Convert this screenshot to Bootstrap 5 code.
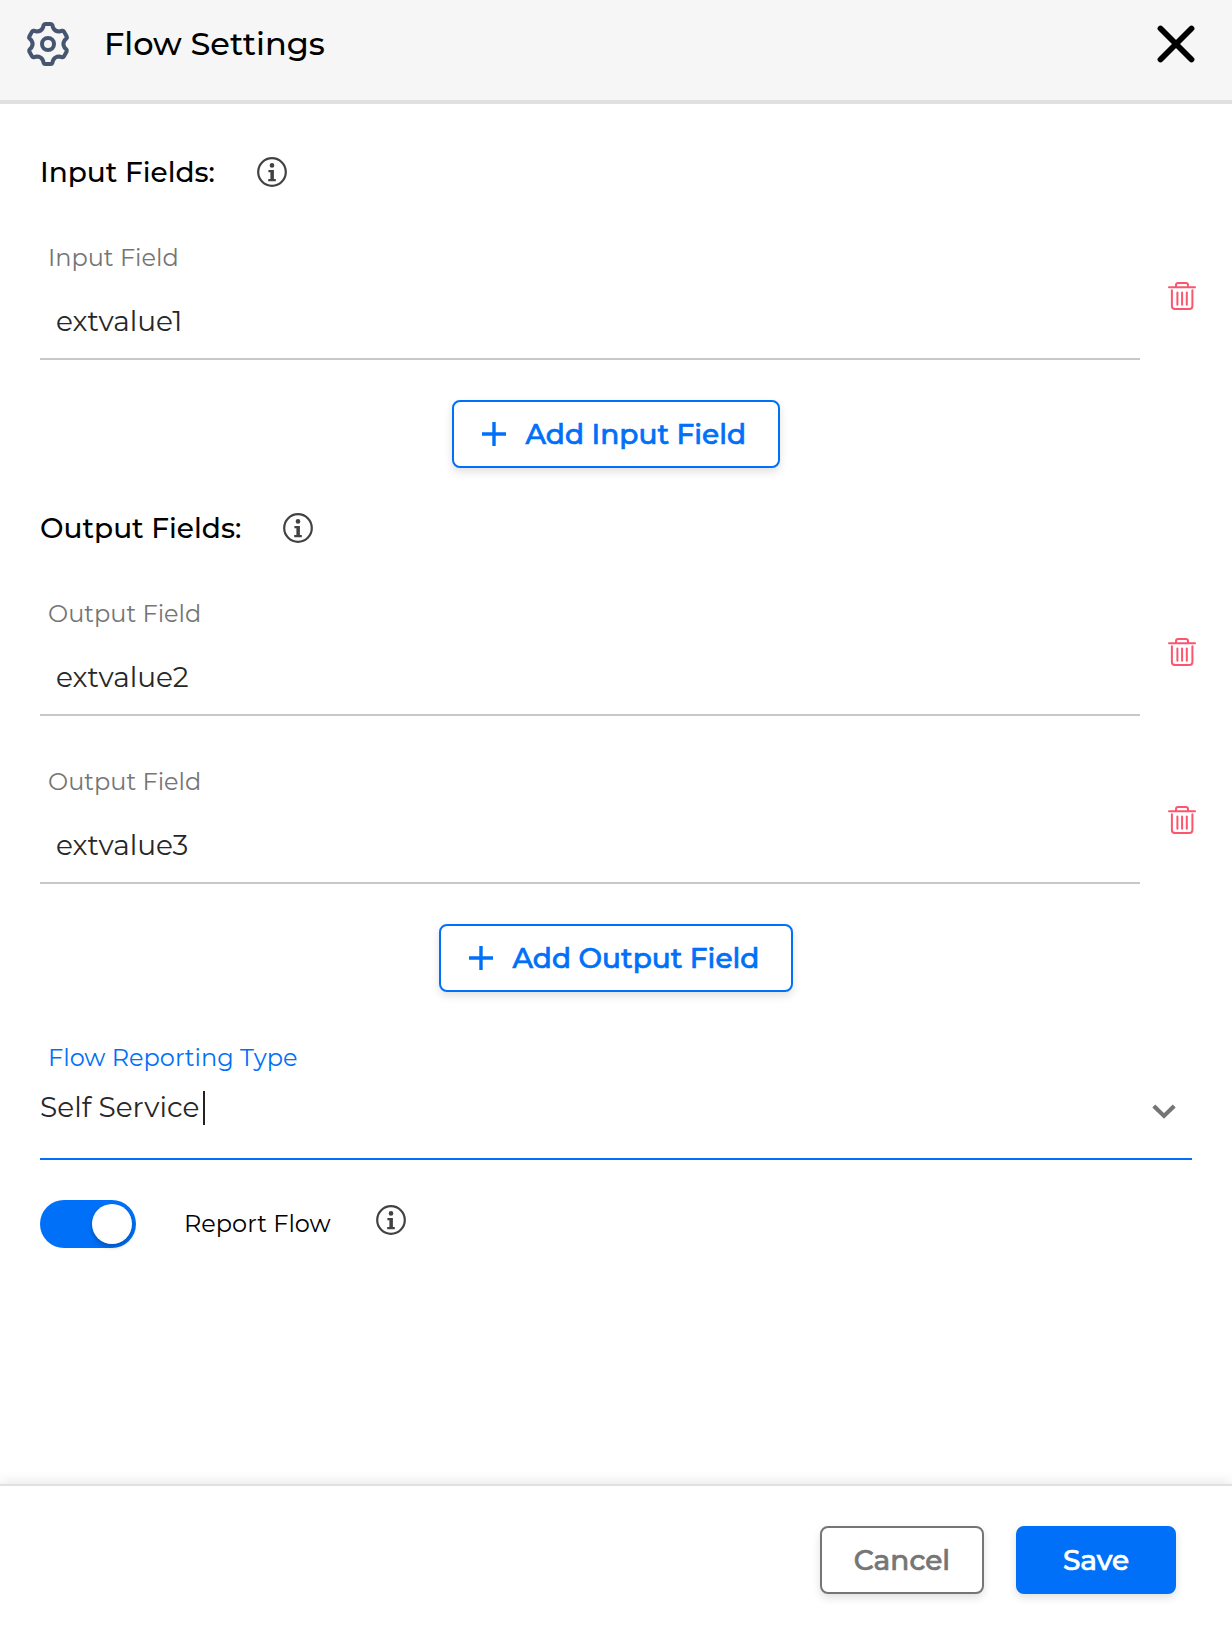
<!DOCTYPE html>
<html lang="en">
<head>
<meta charset="utf-8">
<meta name="viewport" content="width=device-width, initial-scale=1">
<title>Flow Settings</title>
<link rel="stylesheet" href="https://cdn.jsdelivr.net/npm/bootstrap@5.3.0/dist/css/bootstrap.min.css">
<style>
  :root { --flow-blue: #0070f8; --flow-gray: #757575; }
  body { font-family: Montserrat, Inter, sans-serif; color: #000; height: 1630px; background: #fff; overflow: hidden; }
  svg { display: block; flex: none; }

  .panel-head { height: 104px; background: #f6f6f6; border-bottom: 4px solid #e0e0e0; padding: 22px 35px 0 26px; }
  .panel-title { font-size: 32px; font-weight: 500; line-height: 44px; margin-left: 34px; }
  .panel-main { padding: 48px 40px 0; }

  .group-title { font-size: 28px; font-weight: 500; line-height: 40px; }
  .group-head { height: 40px; margin-bottom: 44px; }
  .group-head svg { margin-left: 42px; }

  .field-row { height: 124px; }
  .field-row + .field-row { margin-top: 44px; }
  .field-box { width: 1100px; flex: none; border-bottom: 2px solid #c8c8c8; }
  .field-label { font-size: 24px; line-height: 44px; padding-left: 8px; color: var(--flow-gray); }
  .field-value { font-size: 28px; line-height: 82px; padding-left: 16px; color: #272727; height: 78px; }
  .trash-btn { margin: 46px 0 0 28px; color: #fa566e; }

  .add-line { margin: 40px 0; }
  .btn.btn-flow { height: 68px; border: 2px solid var(--flow-blue); border-radius: 8px; font-size: 28px; font-weight: 500; line-height: 40px; -webkit-text-stroke: .7px currentColor; color: var(--flow-blue); background: #fff; box-shadow: 0 4px 8px rgba(0,0,0,.12); padding: 0; white-space: nowrap; }
  .btn.add-btn { padding-left: 28px; gap: 19.5px; }
  .btn.add-in { width: 328px; }
  .btn.add-out { width: 354px; }
  .btn.cancel-btn { width: 164px; color: var(--flow-gray); border-color: var(--flow-gray); }
  .btn.save-btn { width: 160px; color: #fff; background: var(--flow-blue); }

  .select-box { height: 124px; border-bottom: 2px solid var(--flow-blue); margin-top: 44px; }
  .select-box .field-label { color: var(--flow-blue); }
  .select-value { font-size: 28px; line-height: 32px; padding-bottom: 2px; color: #272727; }
  .select-line { padding: 11px 15px 0 0; }
  .caret-bar { width: 2px; height: 34px; margin-left: 4px; background: #222; }

  .report-line { margin-top: 40px; height: 48px; }
  .flow-toggle { width: 96px; height: 48px; border-radius: 24px; background: var(--flow-blue); padding: 4px; }
  .flow-knob { width: 40px; height: 40px; border-radius: 50%; background: #fff; box-shadow: 0 3px 5px rgba(0,0,0,.25); }
  .report-text { font-size: 24px; line-height: 47px; margin-left: 48px; width: 192px; }
  .report-line svg { margin-top: 5px; }

  .panel-foot { height: 146px; border-top: 2px solid #e0e0e0; padding: 40px 56px 0 0; gap: 32px; box-shadow: 0 -2px 12px rgba(0,0,0,.1); background: #fff; }
</style>
<script src="https://cdn.jsdelivr.net/npm/bootstrap@5.3.0/dist/js/bootstrap.bundle.min.js"></script>
</head>
<body class="d-flex flex-column">

<svg width="0" height="0" class="position-absolute">
  <symbol id="info" viewBox="-15 -15 30 30">
    <circle r="13.8" fill="none" stroke="#424242" stroke-width="2.2"/>
    <circle cy="-6.6" r="2.3" fill="#424242"/>
    <path d="M-3.6-2H1.9V6.9H3.8V9.2H-3.8V6.9H-1.6V.2H-3.6Z" fill="#424242"/>
  </symbol>
  <symbol id="trash" viewBox="0 0 28 28">
    <g fill="none" stroke="currentColor" stroke-width="2" stroke-linecap="round" stroke-linejoin="round">
      <path d="M1 5.2H27"/>
      <path d="M8 5V3.2Q8 1 10.2 1H17.8Q20 1 20 3.2V5"/>
      <path d="M3.9 8.2V24Q3.9 27 6.9 27H21.4Q24.4 27 24.4 24V8.2"/>
      <path d="M9.4 10.6V22.8M14.1 10.6V22.8M18.8 10.6V22.8"/>
    </g>
  </symbol>
  <symbol id="plus" viewBox="0 0 24 24">
    <path d="M12 0V24M0 12H24" stroke="currentColor" stroke-width="3.4"/>
  </symbol>
</svg>

<header class="panel-head d-flex align-items-start">
  <svg width="44" height="44" viewBox="-22 -22 44 44" fill="none" stroke="#475670" stroke-width="4" stroke-linejoin="round">
    <path d="M-2.8-20H2.8Q4-20 4.4-18.8L5.2-16Q7.15-12.4 11.26-12.5L14.1-13.2Q15.3-13.5 15.9-12.4L18.7-7.6Q19.3-6.5 18.5-5.6L16.46-3.5Q14.3 0 16.46 3.5L18.5 5.6Q19.3 6.5 18.7 7.6L15.9 12.4Q15.3 13.5 14.1 13.2L11.26 12.5Q7.15 12.4 5.2 16L4.4 18.8Q4 20 2.8 20H-2.8Q-4 20-4.4 18.8L-5.2 16Q-7.15 12.4-11.26 12.5L-14.1 13.2Q-15.3 13.5-15.9 12.4L-18.7 7.6Q-19.3 6.5-18.5 5.6L-16.46 3.5Q-14.3 0-16.46-3.5L-18.5-5.6Q-19.3-6.5-18.7-7.6L-15.9-12.4Q-15.3-13.5-14.1-13.2L-11.26-12.5Q-7.15-12.4-5.2-16L-4.4-18.8Q-4-20-2.8-20Z"/>
    <circle r="6"/>
  </svg>
  <h1 class="panel-title mb-0">Flow Settings</h1>
  <svg class="ms-auto" width="42" height="44" viewBox="-21 -22 42 44" stroke="#000" stroke-width="5.8" stroke-linecap="round">
    <path d="M-15.5-15.5L15.5 15.5M15.5-15.5L-15.5 15.5"/>
  </svg>
</header>

<main class="panel-main flex-grow-1">
  <section>
    <div class="group-head d-flex align-items-center">
      <h2 class="group-title mb-0">Input Fields:</h2>
      <svg width="30" height="30"><use href="#info"/></svg>
    </div>
    <div class="field-row d-flex">
      <div class="field-box">
        <div class="field-label">Input Field</div>
        <div class="field-value">extvalue1</div>
      </div>
      <div class="trash-btn"><svg width="28" height="28"><use href="#trash"/></svg></div>
    </div>
    <div class="add-line d-flex justify-content-center">
      <button class="btn btn-flow add-btn add-in d-flex align-items-center" type="button"><svg width="24" height="24"><use href="#plus"/></svg>Add Input Field</button>
    </div>
  </section>

  <section>
    <div class="group-head d-flex align-items-center">
      <h2 class="group-title mb-0">Output Fields:</h2>
      <svg width="30" height="30"><use href="#info"/></svg>
    </div>
    <div class="field-row d-flex">
      <div class="field-box">
        <div class="field-label">Output Field</div>
        <div class="field-value">extvalue2</div>
      </div>
      <div class="trash-btn"><svg width="28" height="28"><use href="#trash"/></svg></div>
    </div>
    <div class="field-row d-flex">
      <div class="field-box">
        <div class="field-label">Output Field</div>
        <div class="field-value">extvalue3</div>
      </div>
      <div class="trash-btn"><svg width="28" height="28"><use href="#trash"/></svg></div>
    </div>
    <div class="add-line d-flex justify-content-center">
      <button class="btn btn-flow add-btn add-out d-flex align-items-center" type="button"><svg width="24" height="24"><use href="#plus"/></svg>Add Output Field</button>
    </div>
  </section>

  <section>
    <div class="select-box">
      <div class="field-label">Flow Reporting Type</div>
      <div class="select-line d-flex align-items-center">
        <span class="select-value">Self Service</span><span class="caret-bar"></span>
        <svg class="ms-auto mt-2" width="26" height="20" viewBox="0 0 26 20" fill="none" stroke="#757575" stroke-width="4.2">
          <path d="M2.8 3.9L13 13.9L23.2 3.9"/>
        </svg>
      </div>
    </div>
    <div class="report-line d-flex">
      <div class="flow-toggle d-flex justify-content-end"><span class="flow-knob"></span></div>
      <span class="report-text">Report Flow</span>
      <svg width="30" height="30"><use href="#info"/></svg>
    </div>
  </section>
</main>

<footer class="panel-foot d-flex justify-content-end align-items-start">
  <button class="btn btn-flow cancel-btn" type="button">Cancel</button>
  <button class="btn btn-flow save-btn" type="button">Save</button>
</footer>

</body>
</html>
